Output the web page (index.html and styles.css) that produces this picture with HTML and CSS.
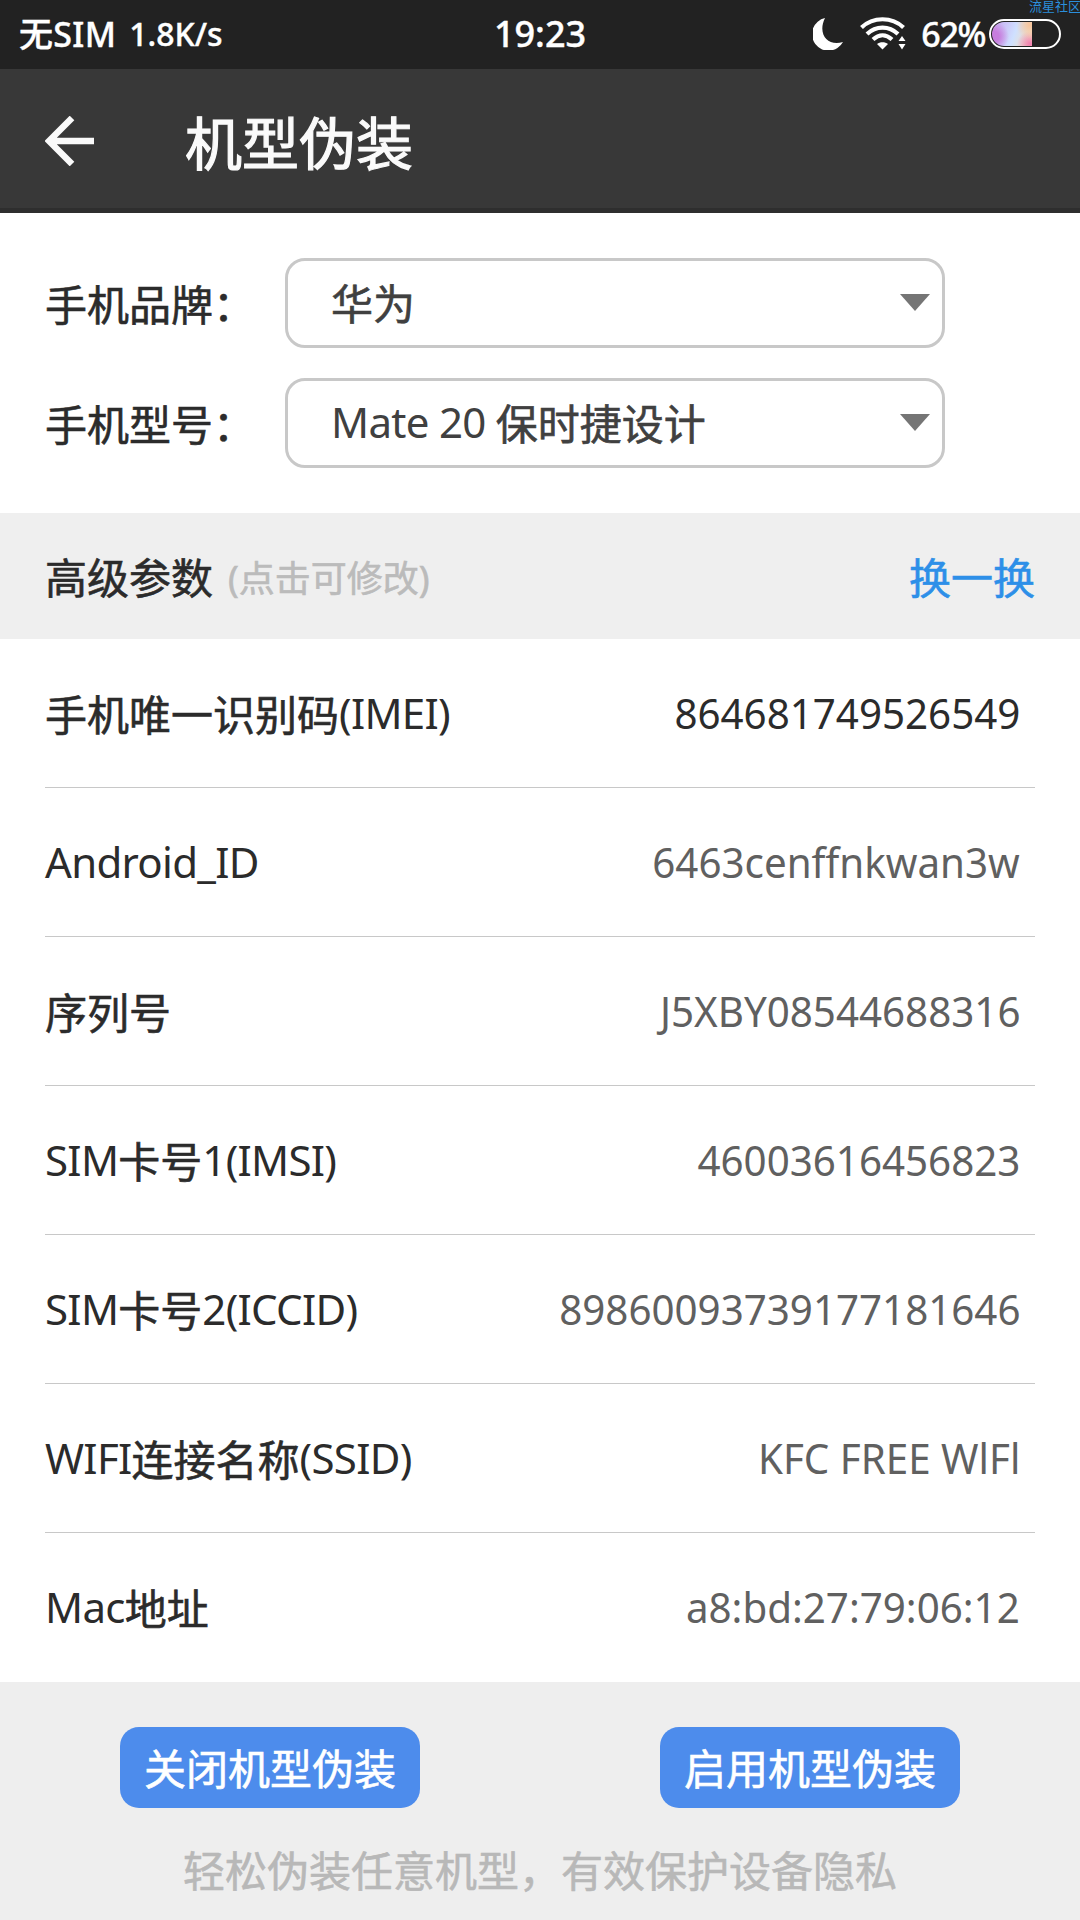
FILE: index.html
```html
<!DOCTYPE html>
<html lang="zh-CN">
<head>
<meta charset="utf-8">
<title>机型伪装</title>
<link rel="stylesheet" href="styles.css">
</head>
<body>
<div class="status">
  <div class="status-left"><span class="carrier">无SIM</span><span class="speed">1.8K/s</span></div>
  <div class="clock">19:23</div>
  <div class="status-right">
    <svg class="moon" width="30" height="32" viewBox="0 0 30 32"><path d="M12 0A16.500 16.500 0 1 0 30 24C15 29 4 16 12 0Z" fill="#fff"/></svg>
    <svg class="wifi" width="46" height="34" viewBox="0 0 46 34">
      <g fill="none" stroke="#fff" stroke-width="4.200"><path d="M1.500 10.500C13-.5 32-.5 43.500 10.500"/><path d="M7 17C16 8.500 29 8.500 38 17"/><path d="M13 22.500C19 17 26 17 32 22.500"/></g>
      <path d="M17 27C20 24.500 25 24.500 28 27L22.500 32.500Z" fill="#fff"/>
      <path d="M38.500 24L42 19L45.500 24ZM38.500 27L42 32.500L45.500 27Z" fill="#fff"/>
    </svg>
    <span class="percent">62%</span>
    <div class="battery"><div class="charge"></div></div>
  </div>
  <div class="watermark">流星社区</div>
</div>
<header class="appbar">
  <svg class="back" width="50" height="50" viewBox="0 0 50 50"><path d="M27 2L4 25L27 48M4 25H49" fill="none" stroke="#fafafa" stroke-width="6.500"/></svg>
  <h1 class="title"><span class="cjk">机型伪装</span></h1>
</header>
<section class="selects">
  <div class="field"><div class="field-label"><span class="cjk">手机品牌：</span></div><div class="select"><span><span class="cjk">华为</span></span><i class="caret"></i></div></div>
  <div class="field"><div class="field-label"><span class="cjk">手机型号：</span></div><div class="select"><span><span class="lat">Mate 20 </span><span class="cjk">保时捷设计</span></span><i class="caret"></i></div></div>
</section>
<section class="band">
  <h2 class="band-title"><span class="cjk">高级参数</span></h2><span class="hint"><span class="cjk">(点击可修改)</span></span><a class="swap"><span class="cjk">换一换</span></a>
</section>
<section class="rows">
  <div class="row"><span><span class="cjk">手机唯一识别码</span><span class="lat">(IMEI)</span></span><span class="value strong">864681749526549</span></div>
  <div class="row"><span class="lat">Android_ID</span><span class="value">6463cenffnkwan3w</span></div>
  <div class="row"><span><span class="cjk">序列号</span></span><span class="value">J5XBY08544688316</span></div>
  <div class="row"><span><span class="lat">SIM</span><span class="cjk">卡号</span><span class="lat">1(IMSI)</span></span><span class="value">46003616456823</span></div>
  <div class="row"><span><span class="lat">SIM</span><span class="cjk">卡号</span><span class="lat">2(ICCID)</span></span><span class="value">89860093739177181646</span></div>
  <div class="row"><span><span class="lat">WIFI</span><span class="cjk">连接名称</span><span class="lat">(SSID)</span></span><span class="value">KFC FREE WlFl</span></div>
  <div class="row"><span><span class="lat">Mac</span><span class="cjk">地址</span></span><span class="value">a8:bd:27:79:06:12</span></div>
</section>
<footer class="footer">
  <div class="buttons"><button class="btn"><span class="cjk">关闭机型伪装</span></button><button class="btn"><span class="cjk">启用机型伪装</span></button></div>
  <p class="note"><span class="cjk">轻松伪装任意机型，有效保护设备隐私</span></p>
</footer>
</body>
</html>
```

FILE: styles.css
```css
* { box-sizing: border-box; }
body {
  margin: 0; width: 1080px; height: 1920px; overflow: hidden;
  display: flex; flex-direction: column;
  background: #fff; color: #2b2b2b;
  font: 42px/1.2 "Noto Sans", "Noto Sans CJK SC", sans-serif;
  white-space: nowrap;
}
.cjk { line-height: 0; vertical-align: -2px; -webkit-text-stroke: .6px currentColor; }
.status {
  position: relative; height: 69px; padding: 0 19px 1px;
  display: grid; grid-template-columns: 1fr auto 1fr; align-items: center;
  background: #222; color: #fff; font-weight: 500; font-size: 34px;
  -webkit-text-stroke: .4px #fff;
}
.status-left { display: flex; align-items: center; gap: 13px; }
.carrier { letter-spacing: .3px; }
.speed { font-size: 32px; }
.clock { font-size: 36px; }
.status-right { display: flex; align-items: center; justify-content: flex-end; }
.wifi { margin-left: 17px; }
.percent { margin-left: 15px; letter-spacing: -1.4px; }
.moon, .wifi { flex: none; }
.battery { width: 72px; height: 30px; margin-left: 4px; border: 2px solid #fff; border-radius: 15px; overflow: hidden; padding: 1px; }
.charge {
  width: 40px; height: 24px; border-radius: 12px 0 0 12px;
  background: radial-gradient(circle at 2px 60%, #c77ddd 0 5px, transparent 15px), radial-gradient(circle at 38px 3px, #f8c49a 0, transparent 14px), radial-gradient(circle at 38px 22px, #f07cb0 0, transparent 13px), linear-gradient(110deg, #c8a4ee, #cfe0ff 55%, #ffe0b0);
}
.watermark { position: absolute; top: -1px; right: -1px; font-size: 13px; line-height: 15px; color: #2b8fdc; font-weight: 400; -webkit-text-stroke: 0; }
.appbar {
  height: 144px; padding: 0 45px; box-shadow: inset 0 -5px #2e2e2e;
  display: flex; align-items: center; gap: 90px; background: #383838; color: #fafafa;
}
.title { margin: 0; font-size: 57px; font-weight: 400; }
.title .cjk { -webkit-text-stroke-width: 1.2px; }
.selects { height: 300px; padding: 45px 45px 0; display: flex; flex-direction: column; gap: 30px; }
.field { display: flex; height: 90px; align-items: center; }
.field-label { width: 240px; }
.select {
  width: 660px; height: 90px; padding: 0 12px 2px 43px; border: 3px solid #c8c8c8; border-radius: 20px;
  display: flex; align-items: center; justify-content: space-between; color: #404040;
}
.caret { border: 15px solid transparent; border-top: 17px solid #757575; border-bottom: 0; }
.band { height: 126px; padding: 0 45px; display: flex; align-items: center; background: #efefef; }
.band-title { margin: 0; font-size: 42px; font-weight: 400; }
.hint { margin: 2px 0 0 15px; font-size: 36px; color: #bbb; }
.swap { margin-left: auto; color: #2d8fe8; }
.rows { padding: 0 45px; }
.row { height: 149px; padding-right: 15px; display: flex; align-items: center; justify-content: space-between; border-bottom: 1px solid #c8c8c8; }
.row:last-child { border-bottom-color: transparent; }
.lat { letter-spacing: -.7px; }
.value { transform: scaleX(.96); transform-origin: right; color: #606060; }
.strong { color: #2b2b2b; }
.footer { flex: 1; padding: 45px 120px 0; background: #eee; }
.buttons { display: flex; justify-content: space-between; }
.btn { width: 300px; height: 81px; padding: 0; border: 0; border-radius: 19px; background: #4d8cec; color: #fff; font: inherit; }
.note { margin: 36px 0 0; color: #b8b8b8; text-align: center; }
```
